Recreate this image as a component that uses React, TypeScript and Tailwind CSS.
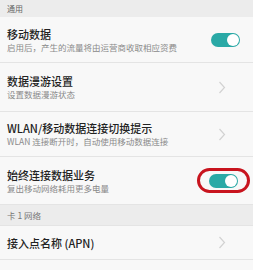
const font = { fontFamily: '"Noto Sans CJK SC", "Noto Sans", sans-serif' }

const Toggle = () => (
    <div className="w-[29px] h-[14px] rounded-full bg-[#2aa9a6] flex items-center justify-end pr-[1px]">
        <div className="w-[12px] h-[12px] rounded-full bg-white"></div>
    </div>
)

const Chevron = () => (
    <svg width="8" height="13" viewBox="0 0 8 13" className="mr-[14px]">
        <polyline points="1.5,1 6.5,6.5 1.5,12" fill="none" stroke="#d2d2d2" strokeWidth="1.2" />
    </svg>
)

const Row = ({ title, sub, right, h }: { title: string, sub?: string, right: 'toggle' | 'chevron' | 'circled', h: string }) => (
    <div className={`flex items-center justify-between pl-[7px] pr-[13px] bg-[#f8f8f8] border-b border-[#e4e4e4] ${h}`}>
        <div className="flex flex-col gap-[1px]">
            <div className="text-[11px] leading-[14px] text-[#222] font-medium">{title}</div>
            {sub && <div className="text-[8.5px] leading-[11px] text-[#8a8a8a]">{sub}</div>}
        </div>
        {right === 'toggle' && <Toggle />}
        {right === 'chevron' && <Chevron />}
        {right === 'circled' && (
            <div className="rounded-[13px] border-[3px] border-[#c8141e] px-[9px] py-[2.5px] -mr-[10px]">
                <Toggle />
            </div>
        )}
    </div>
)

export default function App() {
    return (
        <div className="w-[253px] h-[270px] bg-[#f8f8f8] overflow-hidden" style={font}>
            <div className="h-[17px] bg-[#ececec] flex items-center pl-[7px] text-[8px] text-[#666]">通用</div>
            <Row title="移动数据" sub="启用后，产生的流量将由运营商收取相应资费" right="toggle" h="h-[46px]" />
            <Row title="数据漫游设置" sub="设置数据漫游状态" right="chevron" h="h-[49px]" />
            <Row title="WLAN/移动数据连接切换提示" sub="WLAN 连接断开时，自动使用移动数据连接" right="chevron" h="h-[45px]" />
            <Row title="始终连接数据业务" sub="复出移动网络耗用更多电量" right="circled" h="h-[48px]" />
            <div className="h-[21px] bg-[#ececec] flex items-center pl-[7px] text-[8.5px] text-[#777] border-b border-[#e4e4e4]">卡 1 网络</div>
            <Row title="接入点名称 (APN)" right="chevron" h="h-[34px]" />
        </div>
    )
}
